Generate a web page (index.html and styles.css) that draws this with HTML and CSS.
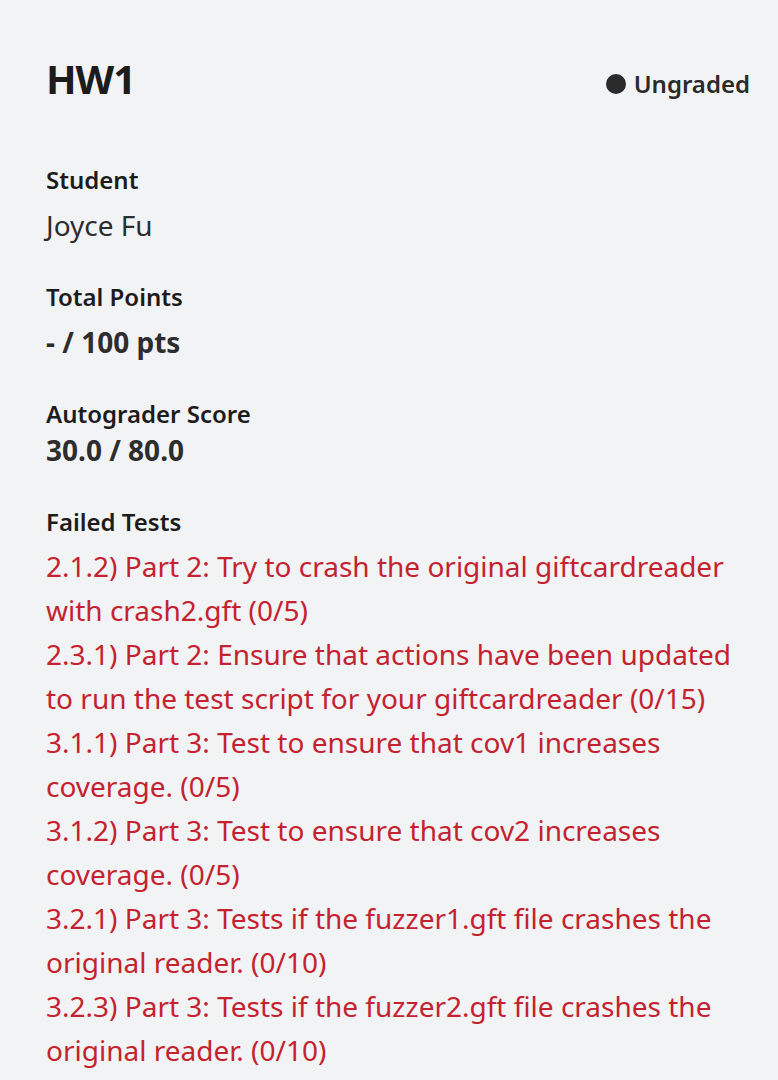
FILE: index.html
```html
<!DOCTYPE html>
<html>
<head>
<meta charset="utf-8">
<link rel="stylesheet" href="styles.css">
</head>
<body>
<div class="page">
  <header class="header">
    <h1 class="title">HW1</h1>
    <div class="status"><span class="dot"></span>Ungraded</div>
  </header>
  <section class="field">
    <div class="label">Student</div>
    <div class="value">Joyce Fu</div>
  </section>
  <section class="field">
    <div class="label">Total Points</div>
    <div class="value strong">- / 100 pts</div>
  </section>
  <section class="field">
    <div class="label">Autograder Score</div>
    <div class="value strong tight">30.0 / 80.0</div>
  </section>
  <section class="field">
    <div class="label">Failed Tests</div>
    <ul class="tests">
      <li>2.1.2) Part 2: Try to crash the original giftcardreader with crash2.gft (0/5)</li>
      <li>2.3.1) Part 2: Ensure that actions have been updated to run the test script for your giftcardreader (0/15)</li>
      <li>3.1.1) Part 3: Test to ensure that cov1 increases coverage. (0/5)</li>
      <li>3.1.2) Part 3: Test to ensure that cov2 increases coverage. (0/5)</li>
      <li>3.2.1) Part 3: Tests if the fuzzer1.gft file crashes the original reader. (0/10)</li>
      <li>3.2.3) Part 3: Tests if the fuzzer2.gft file crashes the original reader. (0/10)</li>
    </ul>
  </section>
</div>
</body>
</html>
```
FILE: styles.css
```css
html, body {
  margin: 0;
  padding: 0;
  background: #f2f3f5;
}
body {
  font-family: "Noto Sans", "Open Sans", sans-serif;
  color: #1f1f1f;
}
.page {
  padding: 49px 28px 0 46px;
}
.header {
  display: flex;
  justify-content: space-between;
  align-items: flex-start;
  margin-bottom: 55px;
}
.title {
  margin: 0;
  font-size: 40px;
  font-weight: 700;
  line-height: 60px;
  letter-spacing: -1px;
  color: #1c1c1c;
}
.status {
  display: flex;
  align-items: center;
  gap: 8px;
  margin-top: 19px;
  font-size: 24px;
  font-weight: 600;
  line-height: 32px;
  color: #2a2a2a;
}
.dot {
  width: 20px;
  height: 20px;
  border-radius: 50%;
  background: #2a2a2a;
}
.field {
  margin-bottom: 34px;
}
.label {
  font-size: 24px;
  font-weight: 600;
  line-height: 32px;
  color: #1c1c1c;
}
.value {
  margin-top: 7px;
  font-size: 28px;
  line-height: 44px;
  color: #2d2d2d;
}
.value.strong {
  font-weight: 700;
}
.value.tight {
  margin-top: -2px;
}
.tests {
  list-style: none;
  margin: 6px 0 0;
  padding: 0;
}
.tests li {
  font-size: 28px;
  line-height: 44px;
  color: #c4222f;
}
```
